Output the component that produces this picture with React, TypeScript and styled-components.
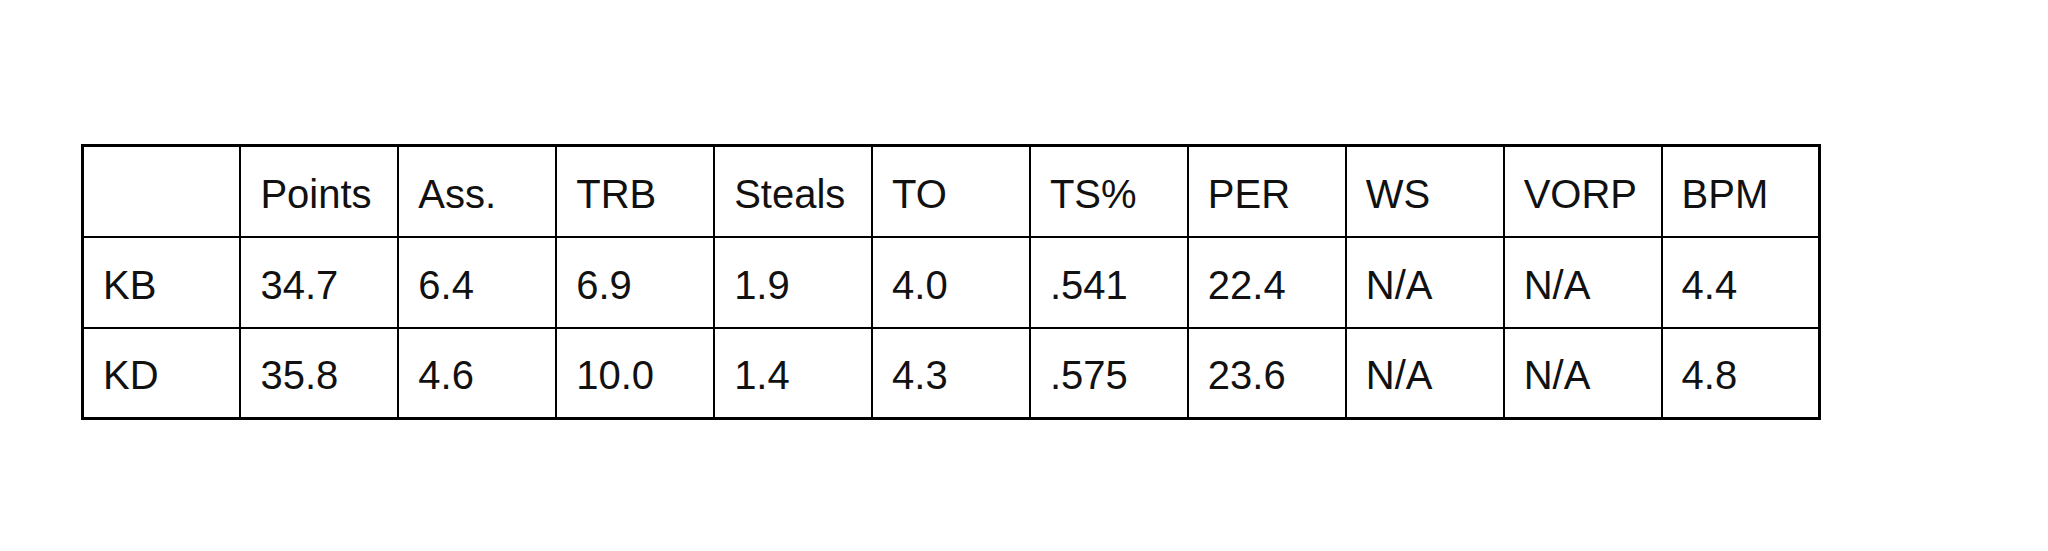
import styled, { createGlobalStyle } from "styled-components";

const GlobalStyle = createGlobalStyle`
  html, body {
    margin: 0;
    padding: 0;
    background: #ffffff;
  }
`;

const headers = ["", "Points", "Ass.", "TRB", "Steals", "TO", "TS%", "PER", "WS", "VORP", "BPM"];

const rows = [
  ["KB", "34.7", "6.4", "6.9", "1.9", "4.0", ".541", "22.4", "N/A", "N/A", "4.4"],
  ["KD", "35.8", "4.6", "10.0", "1.4", "4.3", ".575", "23.6", "N/A", "N/A", "4.8"],
];

export default function App() {
  return (
    <>
      <GlobalStyle />
      <Page>
        <StatTable>
          <tbody>
            <Row>
              {headers.map((h, i) => (
                <Cell key={i}>{h}</Cell>
              ))}
            </Row>
            {rows.map((r, i) => (
              <Row key={i}>
                {r.map((v, j) => (
                  <Cell key={j}>{v}</Cell>
                ))}
              </Row>
            ))}
          </tbody>
        </StatTable>
      </Page>
    </>
  );
}

const Page = styled.div`
  width: 2048px;
  height: 551px;
  padding: 144px 0 0 81px;
  box-sizing: border-box;
`;

const StatTable = styled.table`
  border-collapse: collapse;
  table-layout: fixed;
  width: 1740px;
  border: 3px solid #000;
  font: 400 40px "Liberation Sans", Arial, sans-serif;
  color: #111;
`;

const Row = styled.tr`
  height: 91px;
`;

const Cell = styled.td`
  border: 2px solid #000;
  padding: 6px 0 0 19px;
  vertical-align: middle;
  white-space: nowrap;
  overflow: hidden;
`;
